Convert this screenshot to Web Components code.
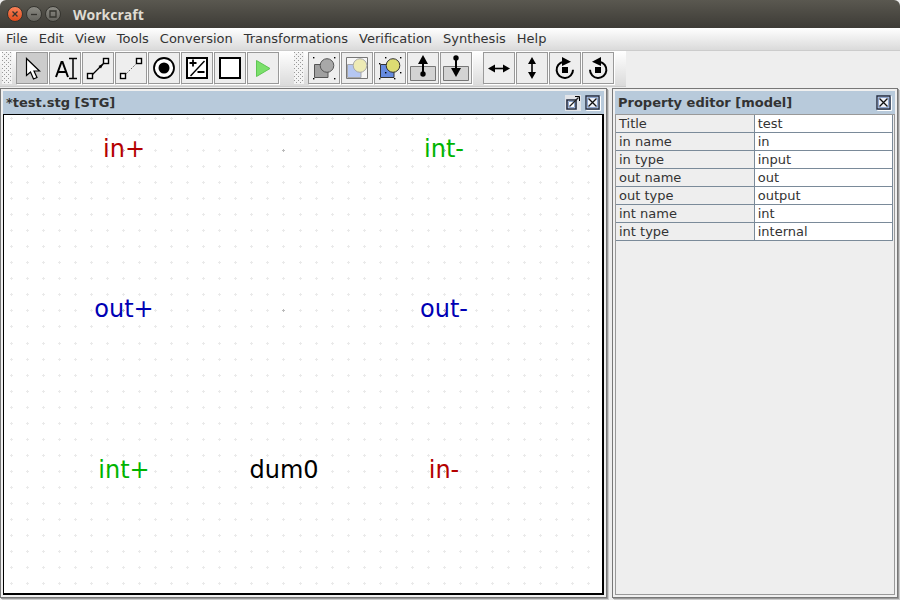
<!DOCTYPE html>
<html lang="en">
<head>
<meta charset="utf-8">
<title>Workcraft</title>
<style>
  html, body { height: 100%; margin: 0; }
  body { background: #eee; color: #333; font: 13px/18px "DejaVu Sans", sans-serif; overflow: hidden; }
</style>
</head>
<body>
<wc-app></wc-app>
<script>
const define = (name, html, setup) => {
  const template = document.createElement('template');
  template.innerHTML = html;
  customElements.define(name, class extends HTMLElement {
    constructor() {
      super();
      this.attachShadow({ mode: 'open' }).append(template.content.cloneNode(true));
    }
    connectedCallback() { if (setup) setup(this, this.shadowRoot); }
  });
};

const square = (x, y) => `<rect x="${x}" y="${y}" width="5" height="5" fill="#fff" stroke="#000" stroke-width="1.4"/>`;
const dots = points => points.map(([x, y]) => `<rect x="${x}" y="${y}" width="1.4" height="1.4" fill="#000"/>`).join('');
const shapes = (box, disc, edge) => `<path d="M6.500 12.500h13.500v13h-13.500z" fill="${box}" stroke="${edge}"/><circle cx="19" cy="13.500" r="6.800" fill="${disc}" stroke="${edge}"/>`;
const icons = {
  select: '<path d="M10.500 6.500v17l4-3.500 3 7 3.500-1.500-3-6.500h5.500z" fill="#fff" stroke="#000" stroke-width="1.200"/>',
  text: '<path d="M7 25l5.500-15h1l5.500 15M9 20h8" fill="none" stroke="#000" stroke-width="2"/><path d="M20 6.500h3.500l.5.500.5-.5H28M24 7v19M20 26.500h3.500l.5-.5.5.5H28" fill="none" stroke="#000" stroke-width="1.500"/>',
  connect: `<path d="M9 24L24 9" stroke="#000" stroke-width="1.200"/><path d="M21.500 11.500l-5 2.500 2.500 2.500z"/>${square(5.5, 21.5)}${square(21.5, 6.5)}`,
  read: `<path d="M9 24L24 9" stroke="#333" stroke-dasharray="1 1.500"/>${square(5.5, 21.5)}${square(21.5, 6.5)}`,
  place: '<circle cx="16" cy="16" r="10" fill="#fff" stroke="#000" stroke-width="1.800"/><circle cx="16" cy="16" r="5.500"/>',
  transition: '<path d="M6 6h20v20H6z" fill="#fff" stroke="#000" stroke-width="2"/><path d="M9.500 24L23.500 9" stroke="#000" stroke-width="1.400"/><path d="M12 7.500v7M8.500 11h7M16.500 20h7" stroke="#000" stroke-width="1.800"/>',
  dummy: '<path d="M6 6h20v20H6z" fill="#fff" stroke="#000" stroke-width="2"/>',
  play: '<path d="M9.500 8.500v16l13.500-8z" fill="#7be06b" stroke="#5fc653"/>',
  group: shapes('#a0a0a0', '#a8a8a8', '#555') + dots([[5, 5], [26, 5], [5, 26], [26, 26]]),
  page: '<path d="M5.500 5.500h21v21h-21z" fill="#f6f6f6" stroke="#777"/>' + shapes('#b5c7f2', '#eeebb5', '#a9a9a9'),
  ungroup: shapes('#668bdf', '#dddc72', '#333') + dots([[11, 5], [26, 5], [5, 11], [5, 26], [20, 26], [11, 20], [26, 20]]),
  up: '<path d="M3.500 14.500h25v14h-25z" fill="#d3d3d3" stroke="#777"/><path d="M16 22V8" stroke="#000" stroke-width="2"/><path d="M16 3l-5 9h10z"/><circle cx="16" cy="22" r="2.700"/>',
  down: '<path d="M3.500 14.500h25v14h-25z" fill="#d3d3d3" stroke="#777"/><path d="M16 6v14" stroke="#000" stroke-width="2"/><path d="M16 25l-5-9h10z"/><circle cx="16" cy="6" r="2.700"/>',
  flipH: '<path d="M8 16.500h16" stroke="#000" stroke-width="1.600"/><path d="M5 16.500l7-4v8zM27 16.500l-7-4v8z"/>',
  flipV: '<path d="M16 8v16" stroke="#000" stroke-width="1.600"/><path d="M16 5l-4 7h8zM16 27l-4-7h8z"/>',
  cw: '<path d="M14.500 9.700a8.200 8.200 0 1 0 9.500 8" fill="none" stroke="#000" stroke-width="2"/><path d="M13 5l9 4.700-9 4.300zM13 15h6v6h-6z"/>',
  ccw: '<path d="M17.500 9.700a8.200 8.200 0 1 1-9.500 8" fill="none" stroke="#000" stroke-width="2"/><path d="M19 5l-9 4.700 9 4.300zM13 15h6v6h-6z"/>'
};

define('wc-window-button', `
  <style>
    :host { display: block; width: 16px; height: 16px; }
    button { display: block; width: 16px; height: 16px; padding: 0; border: 1px solid #35342f; border-radius: 50%; background: linear-gradient(#8b8a83, #65645e); }
    :host([kind=close]) button { background: linear-gradient(#f98259, #df4b1b); }
    svg { display: block; }
  </style>
  <button><svg width="14" height="14" fill="none" stroke="#35342f" stroke-width="1.300"><path/></svg></button>`,
  (host, root) => {
    const kind = host.getAttribute('kind');
    root.querySelector('path').setAttribute('d', { close: 'M4.500 4.500l5 5m0-5l-5 5', minimise: 'M4 7.500h6', maximise: 'M4 4h6v6H4z' }[kind]);
    root.querySelector('button').setAttribute('aria-label', kind);
  });

define('wc-title-bar', `
  <style>
    :host { display: flex; align-items: center; gap: 3px; height: 28px; padding: 0 7px; box-sizing: border-box; border-radius: 6px 6px 0 0; background: linear-gradient(#5a5850, #3d3b36); }
    h1 { margin: 0 0 0 9px; padding-top: 1px; font: bold 14px/20px "Open Sans", "Noto Sans", sans-serif; color: #dfdbd2; }
  </style>
  <wc-window-button kind="close"></wc-window-button>
  <wc-window-button kind="minimise"></wc-window-button>
  <wc-window-button kind="maximise"></wc-window-button>
  <h1><slot></slot></h1>`);

define('wc-menu-bar', `
  <style>
    :host { display: flex; align-items: flex-start; gap: 11px; height: 22px; padding: 0 6px; border-bottom: 1px solid #ccc; background: linear-gradient(#fff, #dadada); }
    button { padding: 0; border: 0; background: none; font: inherit; line-height: 21px; color: inherit; }
  </style>`,
  (host, root) => {
    for (const label of host.getAttribute('items').split(' ')) {
      const button = document.createElement('button');
      button.textContent = label;
      root.append(button);
    }
  });

define('wc-tool', `
  <style>
    :host { display: block; }
    button { display: block; box-sizing: border-box; width: 32px; height: 32px; padding: 0; border: 1px solid #999; background: #eee; box-shadow: 1px 1px #fff; }
    :host([active]) button { background: #ccc; }
    svg { display: block; margin: -1px; }
  </style>
  <button><svg width="32" height="32"></svg></button>`,
  (host, root) => {
    const icon = host.getAttribute('icon');
    root.querySelector('svg').innerHTML = icons[icon];
    root.querySelector('button').setAttribute('aria-label', icon);
  });

define('wc-grip', `
  <style>
    :host { display: block; width: 10px; height: 32px; margin-right: 3px;
      background: conic-gradient(#aaa 25%, transparent 0) 0 0 / 4px 4px; }
    svg { display: block; }
  </style>
  <svg width="10" height="32" aria-hidden="true">
    <defs><pattern id="p" width="4" height="4" patternUnits="userSpaceOnUse"><path d="M0 0h4v4H0z" fill="#f3f3f3"/><path d="M0 0h1v1H0zM2 2h1v1H2z" fill="#999"/></pattern></defs>
    <rect width="10" height="32" fill="url(#p)"/>
  </svg>`);

define('wc-toolbar', `
  <style>
    :host { display: flex; width: max-content; box-sizing: border-box; height: 36px; gap: 1px; padding: 1px 12px 2px 2px; border-bottom: 1px solid #ccc; background: linear-gradient(#fff, #dadada); }
    .gap { width: 9px; }
    .gap.wide { width: 13px; }
  </style>
  <wc-grip></wc-grip>
  <wc-tool icon="select" active></wc-tool><wc-tool icon="text"></wc-tool><wc-tool icon="connect"></wc-tool><wc-tool icon="read"></wc-tool>
  <wc-tool icon="place"></wc-tool><wc-tool icon="transition"></wc-tool><wc-tool icon="dummy"></wc-tool><wc-tool icon="play"></wc-tool>
  <span class="gap wide"></span><wc-grip></wc-grip>
  <wc-tool icon="group"></wc-tool><wc-tool icon="page"></wc-tool><wc-tool icon="ungroup"></wc-tool><wc-tool icon="up"></wc-tool><wc-tool icon="down"></wc-tool>
  <span class="gap"></span>
  <wc-tool icon="flipH"></wc-tool><wc-tool icon="flipV"></wc-tool><wc-tool icon="cw"></wc-tool><wc-tool icon="ccw"></wc-tool>`);

define('wc-panel', `
  <style>
    :host { display: flex; flex-direction: column; min-width: 0; box-sizing: border-box; padding: 2px; border: 1px solid #777; background: #f0f0f0; box-shadow: 1px 1px #999, 2px 2px #ccc; }
    header { display: flex; align-items: center; gap: 4px; height: 23px; padding: 0 3px; background: #b8cadb; }
    h2 { flex: 1; margin: 0; font-size: 13px; line-height: 22px; }
    button { width: 16px; height: 18px; padding: 0; border: 0; background: none; }
    svg { display: block; }
    :host(:not([floatable])) .float { display: none; }
    ::slotted(*) { flex: 1; min-height: 0; }
  </style>
  <header>
    <h2></h2>
    <button class="float" aria-label="Undock"><svg width="16" height="16" fill="none"><path d="M0 0h16v16H0z" fill="#e2e4e8"/><path d="M2 5h9v9H2z" fill="#fff" stroke="#222b40" stroke-width="1.600"/><path d="M3.500 6.500h6v6h-6z" stroke="#8ea6cf"/><path d="M4.500 11.500l9-9" stroke="#222" stroke-width="1.300"/><path d="M10 1.500h4.500V6" stroke="#000"/></svg></button>
    <button aria-label="Close"><svg width="16" height="16" fill="none"><path d="M1.500 1.500h14v14h-14z" stroke="#fff"/><path d="M1 1h13v13H1z" fill="#eef1f8" stroke="#222b40" stroke-width="1.400"/><path d="M2.500 2.500h10v10h-10z" stroke="#8ea6cf"/><path d="M3.500 3.500l8 8m0-8l-8 8" stroke="#111" stroke-width="1.300"/></svg></button>
  </header>
  <slot></slot>`,
  (host, root) => { root.querySelector('h2').textContent = host.getAttribute('heading'); });

define('stg-node', `
  <style>
    :host { position: absolute; width: 100px; margin: -16px 0 0 -50px; text-align: center; font-size: 24px; line-height: 30px; }
    :host([kind=input]) { color: #b40000; }
    :host([kind=output]) { color: #0000b4; }
    :host([kind=internal]) { color: #00b400; }
    :host([kind=dummy]) { color: #000; }
  </style><slot></slot>`,
  host => {
    host.style.left = host.getAttribute('x') + 'px';
    host.style.top = host.getAttribute('y') + 'px';
  });

define('stg-canvas', `
  <style>
    :host { display: block; position: relative; overflow: hidden; border: solid #000; border-width: 1px 2px 2px 1px; background: #fff; }
    svg { position: absolute; inset: 0; width: 100%; height: 100%; }
  </style>
  <svg aria-hidden="true" fill="none"><path class="minor" stroke="#eaeaea"/><path class="major" stroke="#bbb"/></svg>
  <slot></slot>`,
  (host, root) => {
    const step = 16.04, marks = { minor: '', major: '' };
    for (let j = 0; j < 80; j++) for (let i = 0; i < 140; i++) {
      const x = Math.round(6.8 + i * step), y = Math.round(2.98 + j * step);
      marks[i % 10 === 7 && j % 10 === 2 ? 'major' : 'minor'] += `M${x - 1} ${y + .5}h3M${x + .5} ${y - 1}v3`;
    }
    for (const kind in marks) root.querySelector('.' + kind).setAttribute('d', marks[kind]);
  });

define('wc-properties', `
  <style>
    :host { display: block; box-sizing: border-box; border: 1px solid #999; background: #eee; padding-right: 1px; }
    table { width: 100%; border-collapse: collapse; table-layout: fixed; }
    th, td { height: 17px; padding: 0 3px; border-bottom: 1px solid #7a8a99; font-weight: normal; line-height: 17px; text-align: left; }
    td { border-left: 1px solid #7a8a99; border-right: 1px solid #7a8a99; background: #fff; }
  </style>
  <table><tbody></tbody></table>`,
  (host, root) => {
    const body = root.querySelector('tbody');
    const rows = [['Title', 'test'], ['in name', 'in'], ['in type', 'input'], ['out name', 'out'], ['out type', 'output'], ['int name', 'int'], ['int type', 'internal']];
    for (const [name, value] of rows) {
      const row = body.insertRow(), head = document.createElement('th');
      head.scope = 'row';
      head.textContent = name;
      row.append(head);
      row.insertCell().textContent = value;
    }
  });

define('wc-app', `
  <style>
    :host { display: flex; flex-direction: column; height: 100vh; }
    main { flex: 1; min-height: 0; display: grid; grid-template-columns: minmax(0, 607fr) minmax(0, 286fr); gap: 5px; padding: 1px 2px 2px 0; }
  </style>
  <wc-title-bar>Workcraft</wc-title-bar>
  <wc-menu-bar items="File Edit View Tools Conversion Transformations Verification Synthesis Help"></wc-menu-bar>
  <wc-toolbar></wc-toolbar>
  <main>
    <wc-panel heading="*test.stg [STG]" floatable>
      <stg-canvas>
        <stg-node kind="input" x="120" y="35">in+</stg-node>
        <stg-node kind="internal" x="440" y="35">int-</stg-node>
        <stg-node kind="output" x="120" y="195">out+</stg-node>
        <stg-node kind="output" x="440" y="195">out-</stg-node>
        <stg-node kind="internal" x="120" y="356">int+</stg-node>
        <stg-node kind="dummy" x="280" y="356">dum0</stg-node>
        <stg-node kind="input" x="440" y="356">in-</stg-node>
      </stg-canvas>
    </wc-panel>
    <wc-panel heading="Property editor [model]"><wc-properties></wc-properties></wc-panel>
  </main>`);
</script>
</body>
</html>
